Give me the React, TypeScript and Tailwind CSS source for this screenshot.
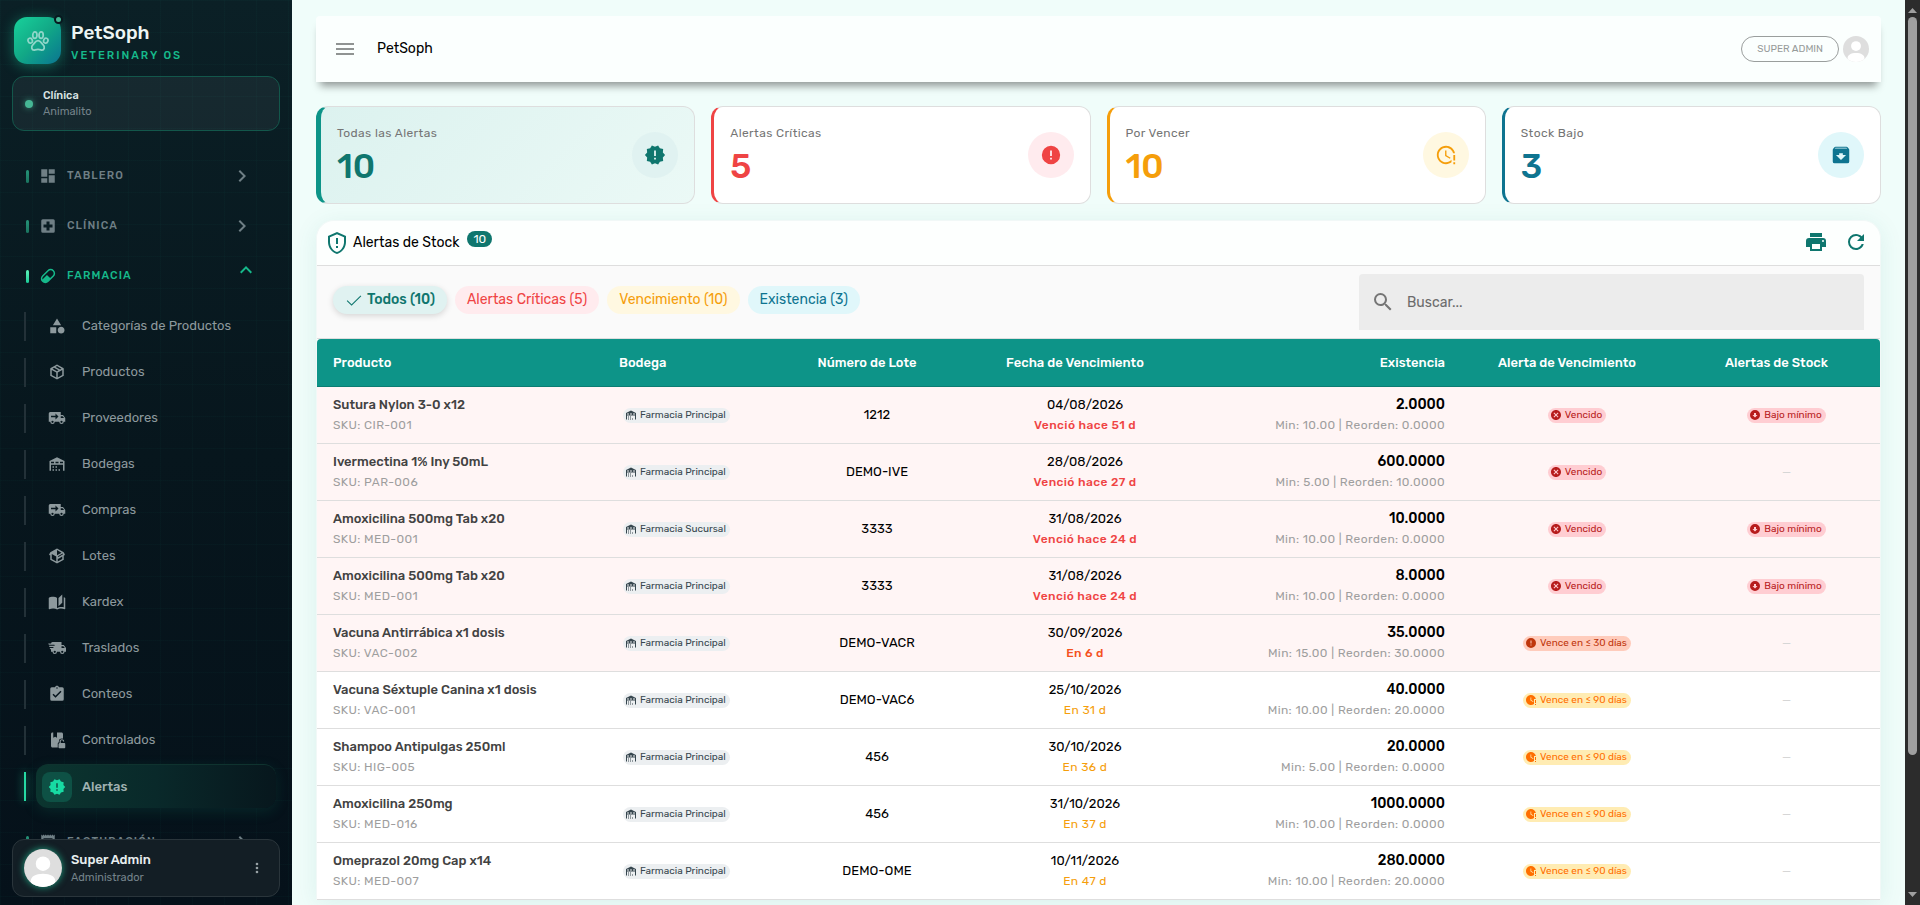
import type { ReactNode } from 'react';
import clsx from 'clsx';

const icons = {
  dashboard: 'M13,3V9H21V3M13,21H21V11H13M3,21H11V15H3M3,13H11V3H3V13Z',
  hospital:
    'M18,14H14V18H10V14H6V10H10V6H14V10H18M19,3H5A2,2 0 0,0 3,5V19A2,2 0 0,0 5,21H19A2,2 0 0,0 21,19V5A2,2 0 0,0 19,3Z',
  pill: 'M4.22,11.29L11.29,4.22C13.64,1.88 17.43,1.88 19.78,4.22C22.12,6.56 22.12,10.36 19.78,12.71L12.71,19.78C10.36,22.12 6.56,22.12 4.22,19.78C1.88,17.43 1.88,13.64 4.22,11.29M5.64,12.71C4.59,13.75 4.24,15.24 4.6,16.57L10.59,10.59L14.83,14.83L18.36,11.29C19.93,9.73 19.93,7.2 18.36,5.64C16.8,4.07 14.27,4.07 12.71,5.64L5.64,12.71Z',
  shape:
    'M11,13.5V21.5H3V13.5H11M12,2L17.5,11H6.5L12,2M17.5,13C20,13 22,15 22,17.5C22,20 20,22 17.5,22C15,22 13,20 13,17.5C13,15 15,13 17.5,13Z',
  packageClosed:
    'M21,16.5C21,16.88 20.79,17.21 20.47,17.38L12.57,21.82C12.41,21.94 12.21,22 12,22C11.79,22 11.59,21.94 11.43,21.82L3.53,17.38C3.21,17.21 3,16.88 3,16.5V7.5C3,7.12 3.21,6.79 3.53,6.62L11.43,2.18C11.59,2.06 11.79,2 12,2C12.21,2 12.41,2.06 12.57,2.18L20.47,6.62C20.79,6.79 21,7.12 21,7.5V16.5M12,4.15L10.11,5.22L16,8.61L17.96,7.5L12,4.15M6.04,7.5L12,10.85L13.96,9.75L8.08,6.35L6.04,7.5M5,15.91L11,19.29V12.58L5,9.21V15.91M19,15.91V9.21L13,12.58V19.29L19,15.91Z',
  packageOpen:
    'M2,10.96C1.5,10.68 1.35,10.07 1.63,9.59L3.13,7C3.24,6.8 3.41,6.66 3.6,6.58L11.43,2.18C11.59,2.06 11.79,2 12,2C12.21,2 12.41,2.06 12.57,2.18L20.47,6.62C20.66,6.72 20.82,6.88 20.91,7.08L22.36,9.6C22.64,10.08 22.47,10.69 22,10.96L21,11.54V16.5C21,16.88 20.79,17.21 20.47,17.38L12.57,21.82C12.41,21.94 12.21,22 12,22C11.79,22 11.59,21.94 11.43,21.82L3.53,17.38C3.21,17.21 3,16.88 3,16.5V10.96C2.7,11.13 2.32,11.14 2,10.96M12,4.15V10.85L17.96,7.5L12,4.15M5,15.91L11,19.29V12.58L5,9.21V15.91M19,15.91V12.69L14,15.59C13.67,15.77 13.3,15.76 13,15.6V19.29L19,15.91M13.85,13.36L20.13,9.73L19.55,8.72L13.27,12.35L13.85,13.36Z',
  truckDelivery:
    'M3,4A2,2 0 0,0 1,6V17H3A3,3 0 0,0 6,20A3,3 0 0,0 9,17H15A3,3 0 0,0 18,20A3,3 0 0,0 21,17H23V12L20,8H17V4M10,6L14,10L10,14V11H4V9H10M17,9.5H19.5L21.47,12H17M6,15.5A1.5,1.5 0 0,1 7.5,17A1.5,1.5 0 0,1 6,18.5A1.5,1.5 0 0,1 4.5,17A1.5,1.5 0 0,1 6,15.5M18,15.5A1.5,1.5 0 0,1 19.5,17A1.5,1.5 0 0,1 18,18.5A1.5,1.5 0 0,1 16.5,17A1.5,1.5 0 0,1 18,15.5Z',
  truckFast:
    'M3 13.5L2.25 12H7.5L6.9 10.5H2L1.25 9H9.05L8.45 7.5H1.11L.25 6H4A2 2 0 0 1 6 4H18V8H21L24 12V17H22A3 3 0 0 1 19 20A3 3 0 0 1 16 17H12A3 3 0 0 1 9 20A3 3 0 0 1 6 17H4V13.5H3M19 18.5A1.5 1.5 0 0 0 20.5 17A1.5 1.5 0 0 0 19 15.5A1.5 1.5 0 0 0 17.5 17A1.5 1.5 0 0 0 19 18.5M20.5 9.5H18V12H22.46L20.5 9.5M9 18.5A1.5 1.5 0 0 0 10.5 17A1.5 1.5 0 0 0 9 15.5A1.5 1.5 0 0 0 7.5 17A1.5 1.5 0 0 0 9 18.5Z',
  warehouse:
    'M6 19H8V21H6V19M12 3L2 8V21H4V13H20V21H22V8L12 3M8 11H4V9H8V11M14 11H10V9H14V11M20 11H16V9H20V11M6 15H8V17H6V15M10 15H12V17H10V15M10 19H12V21H10V19M14 19H16V21H14V19Z',
  book: 'M19 2L14 6.5V17.5L19 13V2M6.5 5C4.55 5 2.45 5.4 1 6.5V21.16C1 21.41 1.25 21.66 1.5 21.66C1.6 21.66 1.65 21.59 1.75 21.59C3.1 20.94 5.05 20.5 6.5 20.5C8.45 20.5 10.55 20.9 12 22C13.35 21.15 15.8 20.5 17.5 20.5C19.15 20.5 20.85 20.81 22.25 21.56C22.35 21.61 22.4 21.59 22.5 21.59C22.75 21.59 23 21.34 23 21.09V6.5C22.4 6.05 21.75 5.75 21 5.5V19C19.9 18.65 18.7 18.5 17.5 18.5C15.8 18.5 13.35 19.15 12 20V6.5C10.55 5.4 8.45 5 6.5 5Z',
  clipboard:
    'M10,17L6,13L7.41,11.59L10,14.17L16.59,7.58L18,9M12,3A1,1 0 0,1 13,4A1,1 0 0,1 12,5A1,1 0 0,1 11,4A1,1 0 0,1 12,3M19,3H14.82C14.4,1.84 13.3,1 12,1C10.7,1 9.6,1.84 9.18,3H5A2,2 0 0,0 3,5V19A2,2 0 0,0 5,21H19A2,2 0 0,0 21,19V5A2,2 0 0,0 19,3Z',
  bookLock:
    'M18 2H12V9L9.5 7.5L7 9V2H6C4.9 2 4 2.9 4 4V20C4 21.1 4.9 22 6 22H13V17C13 16.1 13.7 15.3 14.5 15.1V13.5C14.5 11 16.4 10 18.5 10C19 10 19.5 10.1 20 10.2V4C20 2.9 19.1 2 18 2M22 16H17V13.5C17 12.7 17.7 12.2 18.5 12.2S20 12.7 20 13.5V14H21.5V13.5C21.5 12 20 11 18.5 11S15.5 12 15.5 13.5V16C14.7 16.1 14 16.8 14 17.5V21.5C14 22.3 14.7 23 15.5 23H21.6C22.4 23 23 22.3 23 21.6V17.2C23 16.6 22.6 16 22 16Z',
  decagram:
    'M23,12L20.56,9.22L20.9,5.54L17.29,4.72L15.4,1.54L12,3L8.6,1.54L6.71,4.72L3.1,5.53L3.44,9.21L1,12L3.44,14.78L3.1,18.47L6.71,19.29L8.6,22.47L12,21L15.4,22.46L17.29,19.28L20.9,18.46L20.56,14.78L23,12M13,17H11V15H13V17M13,13H11V7H13V13Z',
  receipt:
    'M3,22L4.5,20.5L6,22L7.5,20.5L9,22L10.5,20.5L12,22L13.5,20.5L15,22L16.5,20.5L18,22L19.5,20.5L21,22V2L19.5,3.5L18,2L16.5,3.5L15,2L13.5,3.5L12,2L10.5,3.5L9,2L7.5,3.5L6,2L4.5,3.5L3,2M18,9H6V7H18M18,13H6V11H18M18,17H6V15H18V17Z',
  alertCircle:
    'M13,13H11V7H13M13,17H11V15H13M12,2A10,10 0 0,0 2,12A10,10 0 0,0 12,22A10,10 0 0,0 22,12A10,10 0 0,0 12,2Z',
  closeCircle:
    'M12,2C17.53,2 22,6.47 22,12C22,17.53 17.53,22 12,22C6.47,22 2,17.53 2,12C2,6.47 6.47,2 12,2M15.59,7L12,10.59L8.41,7L7,8.41L10.59,12L7,15.59L8.41,17L12,13.41L15.59,17L17,15.59L13.41,12L17,8.41L15.59,7Z',
  downCircle:
    'M12,2A10,10 0 0,1 22,12A10,10 0 0,1 12,22A10,10 0 0,1 2,12A10,10 0 0,1 12,2M7,12L12,17L17,12H14V8H10V12H7Z',
  clockOutline:
    'M11 7V13L16.2 16.1L17 14.9L12.5 12.2V7H11M20 12V18H22V12H20M20 20V22H22V20H20M18 20C16.3 21.3 14.3 22 12 22C6.5 22 2 17.5 2 12S6.5 2 12 2C16.8 2 20.9 5.4 21.8 10H19.7C18.8 6.6 15.7 4 12 4C7.6 4 4 7.6 4 12S7.6 20 12 20C14.4 20 16.5 18.9 18 17.3V20Z',
  clock:
    'M12 2C6.5 2 2 6.5 2 12S6.5 22 12 22C14.3 22 16.3 21.3 18 20V10H21.8C20.9 5.4 16.8 2 12 2M16.2 16.2L11 13V7H12.5V12.2L17 14.9L16.2 16.2M20 12V18H22V12H20M20 20V22H22V20H20Z',
  packageDown:
    'M5.12,5L5.93,4H17.93L18.87,5M20.54,5.23L19.15,3.55C18.88,3.21 18.47,3 18,3H6C5.53,3 5.12,3.21 4.84,3.55L3.46,5.23C3.17,5.57 3,6 3,6.5V19A2,2 0 0,0 5,21H19A2,2 0 0,0 21,19V6.5C21,6 20.83,5.57 20.54,5.23M12,17.5L6.5,12H10V10H14V12H17.5L12,17.5Z',
  shield:
    'M21,11C21,16.55 17.16,21.74 12,23C6.84,21.74 3,16.55 3,11V5L12,1L21,5V11M12,21C15.75,20 19,15.54 19,11.22V6.3L12,3.18L5,6.3V11.22C5,15.54 8.25,20 12,21M11,7H13V13H11V7M11,15H13V17H11V15Z',
  printer:
    'M18,3H6V7H18M19,12A1,1 0 0,1 18,11A1,1 0 0,1 19,10A1,1 0 0,1 20,11A1,1 0 0,1 19,12M16,19H8V14H16M19,8H5A3,3 0 0,0 2,11V17H6V21H18V17H22V11A3,3 0 0,0 19,8Z',
  refresh:
    'M17.65,6.35C16.2,4.9 14.21,4 12,4A8,8 0 0,0 4,12A8,8 0 0,0 12,20C15.73,20 18.84,17.45 19.73,14H17.65C16.83,16.33 14.61,18 12,18A6,6 0 0,1 6,12A6,6 0 0,1 12,6C13.66,6 15.14,6.69 16.22,7.78L13,11H20V4L17.65,6.35Z',
  magnify:
    'M9.5,3A6.5,6.5 0 0,1 16,9.5C16,11.11 15.41,12.59 14.44,13.73L14.71,14H15.5L20.5,19L19,20.5L14,15.5V14.71L13.73,14.44C12.59,15.41 11.11,16 9.5,16A6.5,6.5 0 0,1 3,9.5A6.5,6.5 0 0,1 9.5,3M9.5,5C7,5 5,7 5,9.5C5,12 7,14 9.5,14C12,14 14,12 14,9.5C14,7 12,5 9.5,5Z',
  menu: 'M3,6H21V8H3V6M3,11H21V13H3V11M3,16H21V18H3V16Z',
  dots: 'M12,16A2,2 0 0,1 14,18A2,2 0 0,1 12,20A2,2 0 0,1 10,18A2,2 0 0,1 12,16M12,10A2,2 0 0,1 14,12A2,2 0 0,1 12,14A2,2 0 0,1 10,12A2,2 0 0,1 12,10M12,4A2,2 0 0,1 14,6A2,2 0 0,1 12,8A2,2 0 0,1 10,6A2,2 0 0,1 12,4Z',
  chevronRight: 'M8.59,16.58L13.17,12L8.59,7.41L10,6L16,12L10,18L8.59,16.58Z',
  chevronUp: 'M7.41,15.41L12,10.83L16.59,15.41L18,14L12,8L6,14L7.41,15.41Z',
  check: 'M20.7 5.9L8.8 17.8L3.3 12.3L2.3 13.3L8.8 19.8L21.7 6.9Z',
};

type IconName = keyof typeof icons;

function Icon({ name, className }: { name: IconName; className?: string }) {
  return (
    <svg viewBox="0 0 24 24" fill="currentColor" aria-hidden="true" className={clsx('shrink-0', className)}>
      <path d={icons[name]} />
    </svg>
  );
}

function PawIcon({ className }: { className?: string }) {
  return (
    <svg viewBox="0 0 24 24" fill="none" stroke="currentColor" strokeWidth="1.9" aria-hidden="true" className={className}>
      <ellipse cx="8.6" cy="5.6" rx="2.3" ry="3.5" />
      <ellipse cx="15.4" cy="5.6" rx="2.3" ry="3.5" />
      <ellipse cx="3.5" cy="11.6" rx="2.3" ry="2.8" transform="rotate(-20 3.5 11.6)" />
      <ellipse cx="20.5" cy="11.6" rx="2.3" ry="2.8" transform="rotate(20 20.5 11.6)" />
      <path d="M12 11.5c-2.600 0-3.600 2.600-5.200 4.300-1.500 1.500-2 2.600-1.600 4 .5 1.700 2.100 2.300 3.700 1.900 1.200-.3 2-.5 3.100-.5s1.900.2 3.100.5c1.600.4 3.200-.2 3.700-1.900.4-1.400-.1-2.500-1.600-4-1.600-1.700-2.600-4.300-5.200-4.300z" />
    </svg>
  );
}

function Avatar({ className }: { className?: string }) {
  return (
    <svg viewBox="0 0 40 40" role="img" aria-label="Avatar" className={clsx('shrink-0 rounded-full', className)}>
      <rect width="40" height="40" fill="#dedede" />
      <circle cx="20" cy="15.500" r="7.600" fill="#fff" />
      <path d="M7 40v-6c0-5 5-8 13-8s13 3 13 8v6z" fill="#fff" />
    </svg>
  );
}

const subItems: { label: string; icon: IconName }[] = [
  { label: 'Categorías de Productos', icon: 'shape' },
  { label: 'Productos', icon: 'packageClosed' },
  { label: 'Proveedores', icon: 'truckDelivery' },
  { label: 'Bodegas', icon: 'warehouse' },
  { label: 'Compras', icon: 'truckDelivery' },
  { label: 'Lotes', icon: 'packageOpen' },
  { label: 'Kardex', icon: 'book' },
  { label: 'Traslados', icon: 'truckFast' },
  { label: 'Conteos', icon: 'clipboard' },
  { label: 'Controlados', icon: 'bookLock' },
];

function NavGroup({ label, icon, open }: { label: string; icon: IconName; open?: boolean }) {
  return (
    <button
      type="button"
      aria-expanded={!!open}
      className={clsx('flex h-[50px] w-full items-center pr-[34px] pl-[26px] text-left', open ? 'text-[#16b98b]' : 'text-[#6f7f85]')}
    >
      <span
        className={clsx(
          'h-[13px] w-[3px] rounded-sm',
          open ? 'bg-linear-to-b from-[#5df5b9] to-[#13c997]' : 'bg-linear-to-b from-[#259478] to-[#1a735f]',
        )}
      />
      <Icon name={icon} className="ml-[10px] size-[18px]" />
      <span className="ml-[10px] text-[11px] leading-4 font-medium tracking-widest">{label}</span>
      <Icon name={open ? 'chevronUp' : 'chevronRight'} className={clsx('ml-auto size-6', open ? 'mb-3' : 'mr-1')} />
    </button>
  );
}

function Sidebar() {
  return (
    <aside className="relative flex w-[292px] shrink-0 flex-col overflow-hidden bg-linear-to-b from-[#0b2026] via-[#07161d] to-[#05111a]">
      <div className="pointer-events-none absolute inset-0 bg-[linear-gradient(rgba(20,184,140,0.03)_1px,transparent_1px),linear-gradient(90deg,rgba(20,184,140,0.03)_1px,transparent_1px)] bg-[size:32px_32px]" />
      <div className="relative flex h-[76px] shrink-0 items-end pb-3 pl-[14px]">
        <div className="relative flex size-[47px] items-center justify-center rounded-[13px] bg-linear-135 from-[#18d29b] via-[#12a886] to-[#0e7490] text-[#8fd6c9] shadow-[0_2px_14px_rgba(20,200,150,0.45)]">
          <PawIcon className="size-[22px]" />
          <span className="absolute -top-[2px] -right-[2px] size-[9px] rounded-full border-2 border-[#08191f] bg-[#46b795]" />
        </div>
        <div className="ml-[10px]">
          <p className="text-[19px] leading-6 font-medium text-[#edf5f4]">PetSoph</p>
          <p className="mt-[3px] text-[11px] leading-4 font-medium tracking-[2px] text-[#16b98b]">VETERINARY OS</p>
        </div>
      </div>
      <div className="relative mx-3 flex h-[55px] shrink-0 items-center rounded-xl border border-[#13574b] bg-white/5 pl-3">
        <span className="size-[8px] rounded-full bg-[#46b795] shadow-[0_0_6px_rgba(70,183,149,0.7)]" />
        <div className="ml-[10px]">
          <p className="text-[11px] leading-4 font-medium text-[#dce4e5]">Clínica</p>
          <p className="text-[11px] leading-4 text-[#74838a]">Animalito</p>
        </div>
      </div>
      <nav className="relative min-h-0 flex-1 overflow-hidden pt-5">
        <NavGroup label="TABLERO" icon="dashboard" />
        <NavGroup label="CLÍNICA" icon="hospital" />
        <NavGroup label="FARMACIA" icon="pill" open />
        <div className="pt-[2px] pl-6">
          {subItems.map((item) => (
            <a key={item.label} href="#" className="flex h-[46px] items-center text-[13px] leading-5 text-[#8d999d]">
              <span className="h-[29px] w-[2px] bg-[#233138]" />
              <Icon name={item.icon} className="ml-[22px] size-[18px]" />
              <span className="ml-4">{item.label}</span>
            </a>
          ))}
          <a href="#" aria-current="page" className="flex h-[46px] items-center text-[13px] leading-5 font-medium text-[#a0b1b1]">
            <span className="h-[29px] w-[2px] bg-[#27dba4] shadow-[0_0_8px_rgba(39,219,164,0.8)]" />
            <span className="mr-4 ml-[10px] flex h-11 flex-1 items-center rounded-xl border-t border-[#0f332f] bg-linear-to-r from-[#0b352f] via-[#09292a] to-[#07171d] pl-[6px] shadow-[0_4px_14px_rgba(14,120,95,0.2)]">
              <span className="flex size-[30px] items-center justify-center rounded-lg bg-[#0e5145]">
                <Icon name="decagram" className="size-[18px] text-[#17dba3]" />
              </span>
              <span className="ml-[10px]">Alertas</span>
            </span>
          </a>
        </div>
        <div className="pt-2">
          <NavGroup label="FACTURACIÓN" icon="receipt" />
        </div>
      </nav>
      <div className="absolute inset-x-3 bottom-2 flex h-[58px] items-center rounded-xl border border-[#2a353b] bg-[#131e25] pr-[10px] pl-[11px]">
        <Avatar className="size-[38px] shadow-[0_0_6px_1px_rgba(30,200,155,0.6)]" />
        <div className="ml-[9px]">
          <p className="text-[13px] leading-5 font-medium text-[#e8eeef]">Super Admin</p>
          <p className="text-[11px] leading-4 text-[#74838a]">Administrador</p>
        </div>
        <button type="button" aria-label="Opciones" className="ml-auto p-1 text-[#98a1a5]">
          <Icon name="dots" className="size-4" />
        </button>
      </div>
    </aside>
  );
}

function StatCard({
  label,
  value,
  icon,
  className,
  valueClass,
  iconClass,
}: {
  label: string;
  value: number;
  icon: IconName;
  className: string;
  valueClass: string;
  iconClass: string;
}) {
  return (
    <button
      type="button"
      className={clsx('flex h-[98px] items-center justify-between rounded-xl border border-[#dedede] px-4 text-left', className)}
    >
      <span>
        <span className="block text-[12px] leading-5 tracking-[0.033em] text-[#757575]">{label}</span>
        <span className={clsx('mt-1 block text-[34px] leading-10 font-medium', valueClass)}>{value}</span>
      </span>
      <span className={clsx('flex size-[46px] items-center justify-center rounded-full', iconClass)}>
        <Icon name={icon} className="size-[22px]" />
      </span>
    </button>
  );
}

function Pill({ icon, className, children }: { icon: IconName; className: string; children: ReactNode }) {
  return (
    <span className={clsx('inline-flex h-[15px] items-center gap-[3px] rounded-full pr-1 pl-[2px] text-[10px] leading-[15px]', className)}>
      <Icon name={icon} className="size-3" />
      {children}
    </span>
  );
}

type Level = 'expired' | 'd30' | 'd90';

type Row = {
  name: string;
  sku: string;
  store: string;
  lot: string;
  date: string;
  due: string;
  stock: string;
  limits: string;
  level: Level;
  low?: boolean;
};

const rows: Row[] = [
  { name: 'Sutura Nylon 3-0 x12', sku: 'CIR-001', store: 'Farmacia Principal', lot: '1212', date: '04/08/2026', due: 'Venció hace 51 d', stock: '2.0000', limits: 'Min: 10.00 | Reorden: 0.0000', level: 'expired', low: true },
  { name: 'Ivermectina 1% Iny 50mL', sku: 'PAR-006', store: 'Farmacia Principal', lot: 'DEMO-IVE', date: '28/08/2026', due: 'Venció hace 27 d', stock: '600.0000', limits: 'Min: 5.00 | Reorden: 10.0000', level: 'expired' },
  { name: 'Amoxicilina 500mg Tab x20', sku: 'MED-001', store: 'Farmacia Sucursal', lot: '3333', date: '31/08/2026', due: 'Venció hace 24 d', stock: '10.0000', limits: 'Min: 10.00 | Reorden: 0.0000', level: 'expired', low: true },
  { name: 'Amoxicilina 500mg Tab x20', sku: 'MED-001', store: 'Farmacia Principal', lot: '3333', date: '31/08/2026', due: 'Venció hace 24 d', stock: '8.0000', limits: 'Min: 10.00 | Reorden: 0.0000', level: 'expired', low: true },
  { name: 'Vacuna Antirrábica x1 dosis', sku: 'VAC-002', store: 'Farmacia Principal', lot: 'DEMO-VACR', date: '30/09/2026', due: 'En 6 d', stock: '35.0000', limits: 'Min: 15.00 | Reorden: 30.0000', level: 'd30' },
  { name: 'Vacuna Séxtuple Canina x1 dosis', sku: 'VAC-001', store: 'Farmacia Principal', lot: 'DEMO-VAC6', date: '25/10/2026', due: 'En 31 d', stock: '40.0000', limits: 'Min: 10.00 | Reorden: 20.0000', level: 'd90' },
  { name: 'Shampoo Antipulgas 250ml', sku: 'HIG-005', store: 'Farmacia Principal', lot: '456', date: '30/10/2026', due: 'En 36 d', stock: '20.0000', limits: 'Min: 5.00 | Reorden: 0.0000', level: 'd90' },
  { name: 'Amoxicilina 250mg', sku: 'MED-016', store: 'Farmacia Principal', lot: '456', date: '31/10/2026', due: 'En 37 d', stock: '1000.0000', limits: 'Min: 10.00 | Reorden: 0.0000', level: 'd90' },
  { name: 'Omeprazol 20mg Cap x14', sku: 'MED-007', store: 'Farmacia Principal', lot: 'DEMO-OME', date: '10/11/2026', due: 'En 47 d', stock: '280.0000', limits: 'Min: 10.00 | Reorden: 20.0000', level: 'd90' },
];

const dueClass: Record<Level, string> = {
  expired: 'font-medium text-[#ef4444]',
  d30: 'font-medium text-[#f4511e]',
  d90: 'text-[#f59e0b]',
};

function LevelPill({ level }: { level: Level }) {
  if (level === 'expired') return <Pill icon="closeCircle" className="bg-[#ffcdd2] text-[#b71c1c]">Vencido</Pill>;
  if (level === 'd30') return <Pill icon="alertCircle" className="bg-[#ffccbc] text-[#bf360c]">Vence en ≤ 30 días</Pill>;
  return <Pill icon="clock" className="bg-[#ffecb3] text-[#ff6f00]">Vence en ≤ 90 días</Pill>;
}

function AlertTable() {
  return (
    <table className="w-full table-fixed border-separate border-spacing-0 text-[13px] leading-5">
      <colgroup>
        <col className="w-[286px]" />
        <col className="w-[169px]" />
        <col className="w-[210px]" />
        <col className="w-[206px]" />
        <col />
        <col className="w-[232px]" />
        <col className="w-[187px]" />
      </colgroup>
      <thead>
        <tr className="h-12 text-white *:border-b *:border-[#0b7d73] *:bg-[#0d9488] *:pl-4 *:font-medium">
          <th className="rounded-tl text-left">Producto</th>
          <th className="text-left">Bodega</th>
          <th className="pr-9">Número de Lote</th>
          <th className="pr-9">Fecha de Vencimiento</th>
          <th className="pr-4 text-right">Existencia</th>
          <th className="pr-9">Alerta de Vencimiento</th>
          <th className="rounded-tr pr-9">Alertas de Stock</th>
        </tr>
      </thead>
      <tbody>
        {rows.map((row, i) => (
          <tr
            key={i}
            className={clsx('h-[57px] text-center *:border-b *:border-[#dedede] *:px-4', row.level === 'd90' ? 'bg-white' : 'bg-[#fff5f5]')}
          >
            <td className="text-left whitespace-nowrap">
              <div className="font-medium text-[#424242]">{row.name}</div>
              <div className="text-[12px] tracking-[0.033em] text-[#9e9e9e]">SKU: {row.sku}</div>
            </td>
            <td className="text-left whitespace-nowrap">
              <div className="ml-1 flex">
                <Pill icon="warehouse" className="bg-[#eceff1] text-[#37474f]">{row.store}</Pill>
              </div>
            </td>
            <td>{row.lot}</td>
            <td>
              <div>{row.date}</div>
              <div className={clsx('text-[12px] tracking-[0.033em]', dueClass[row.level])}>{row.due}</div>
            </td>
            <td className="text-right whitespace-nowrap">
              <div className="text-[14px] font-medium">{row.stock}</div>
              <div className="text-[12px] tracking-[0.033em] text-[#9e9e9e]">{row.limits}</div>
            </td>
            <td>
              <div className="flex justify-center"><LevelPill level={row.level} /></div>
            </td>
            <td>
              <div className="flex justify-center">
                {row.low ? (
                  <Pill icon="downCircle" className="bg-[#ffcdd2] text-[#b71c1c]">Bajo mínimo</Pill>
                ) : (
                  <span className="text-[12px] text-[#d6d6d6]">—</span>
                )}
              </div>
            </td>
          </tr>
        ))}
      </tbody>
    </table>
  );
}

const chip = 'flex h-7 items-center rounded-full px-3 text-[14px] leading-5';

export default function App() {
  return (
    <div className="flex h-screen overflow-hidden bg-[#f0fdfa] font-['Rubik','Inter',sans-serif] text-black">
      <Sidebar />
      <main className="min-w-0 flex-1 overflow-hidden px-6 pt-4">
        <header className="flex h-[66px] items-center rounded-t bg-[#fbfffe] pr-3 pl-[17px] shadow-[0_8px_8px_-4px_rgba(0,0,0,0.4)]">
          <button type="button" aria-label="Menú" className="text-[#8f9392]">
            <Icon name="menu" className="size-6" />
          </button>
          <h1 className="ml-5 text-[14px] leading-6">PetSoph</h1>
          <span className="ml-auto flex h-[26px] items-center rounded-full border border-[#9a9e9d] px-[15px] text-[10px] text-[#979b9a]">
            SUPER ADMIN
          </span>
          <Avatar className="ml-1 size-[26px]" />
        </header>

        <section className="mt-6 grid grid-cols-4 gap-4">
          <StatCard
            label="Todas las Alertas"
            value={10}
            icon="decagram"
            className="border-[#bfd8d3] border-l-5 border-l-[#0d9488] bg-linear-135 from-[#dcf2ef] to-[#ebf9f6]"
            valueClass="text-[#0f766e]"
            iconClass="bg-[#e0f2f1] text-[#0f766e]"
          />
          <StatCard
            label="Alertas Críticas"
            value={5}
            icon="alertCircle"
            className="border-l-3 border-l-[#ef4444] bg-white"
            valueClass="text-[#ef4444]"
            iconClass="bg-[#ffebee] text-[#ef4444]"
          />
          <StatCard
            label="Por Vencer"
            value={10}
            icon="clockOutline"
            className="border-l-3 border-l-[#f59e0b] bg-white"
            valueClass="text-[#f59e0b]"
            iconClass="bg-[#fff8e1] text-[#f59e0b]"
          />
          <StatCard
            label="Stock Bajo"
            value={3}
            icon="packageDown"
            className="border-l-3 border-l-[#0e7490] bg-white"
            valueClass="text-[#0e7490]"
            iconClass="bg-[#e0f7fa] text-[#0e7490]"
          />
        </section>

        <section className="mt-4 overflow-hidden rounded-t-[18px] border border-b-0 border-[#f1f8f7] bg-[#fdfffe] shadow-[0_4px_24px_rgba(15,118,110,0.09)]">
          <div className="flex h-[45px] items-center border-b border-[#dedede] pr-3 pl-2">
            <Icon name="shield" className="size-6 text-[#0f766e]" />
            <h2 className="ml-1 text-[14px] leading-6">Alertas de Stock</h2>
            <span className="mb-2 ml-2 rounded-full bg-[#0f766e] px-[6px] text-[12px] leading-4 text-white">10</span>
            <div className="mb-[2px] ml-auto flex gap-4 text-[#0f766e]">
              <button type="button" aria-label="Imprimir"><Icon name="printer" className="size-6" /></button>
              <button type="button" aria-label="Actualizar"><Icon name="refresh" className="size-6" /></button>
            </div>
          </div>
          <div className="flex h-[73px] items-center justify-between border-b border-[#dedede] bg-[#fafafa] px-4">
            <div className="mb-1 flex gap-2">
              <button type="button" className={clsx(chip, 'bg-[#e0f2f1] font-medium text-[#0f766e] shadow-[0_2px_6px_rgba(0,0,0,0.15)]')}>
                <Icon name="check" className="mr-1 size-[18px]" />
                Todos (10)
              </button>
              <button type="button" className={clsx(chip, 'bg-[#ffebee] text-[#ef4444]')}>Alertas Críticas (5)</button>
              <button type="button" className={clsx(chip, 'bg-[#fff8e1] text-[#f59e0b]')}>Vencimiento (10)</button>
              <button type="button" className={clsx(chip, 'bg-[#e0f7fa] text-[#0e7490]')}>Existencia (3)</button>
            </div>
            <label className="flex h-14 w-[505px] items-center rounded-t bg-[#ececec] px-3 text-[#757575]">
              <Icon name="magnify" className="size-6" />
              <input
                type="text"
                aria-label="Buscar"
                placeholder="Buscar..."
                className="ml-3 min-w-0 flex-1 bg-transparent text-[14px] outline-none placeholder:text-[#6b6b6b]"
              />
            </label>
          </div>
          <AlertTable />
        </section>
      </main>

      {/* scroll track */}
      <div className="flex w-[15px] shrink-0 flex-col items-center bg-[#2c2c2c] py-2 text-[#9f9f9f]">
        <svg viewBox="0 0 9 5" className="h-[5px] w-[9px] shrink-0" fill="currentColor"><path d="M0 5L4.5 0L9 5Z" /></svg>
        <div className="mt-1 h-[83%] w-[9px] rounded-full bg-[#9f9f9f]" />
        <svg viewBox="0 0 9 5" className="mt-auto h-[5px] w-[9px] shrink-0" fill="currentColor"><path d="M0 0H9L4.5 5Z" /></svg>
      </div>
    </div>
  );
}
